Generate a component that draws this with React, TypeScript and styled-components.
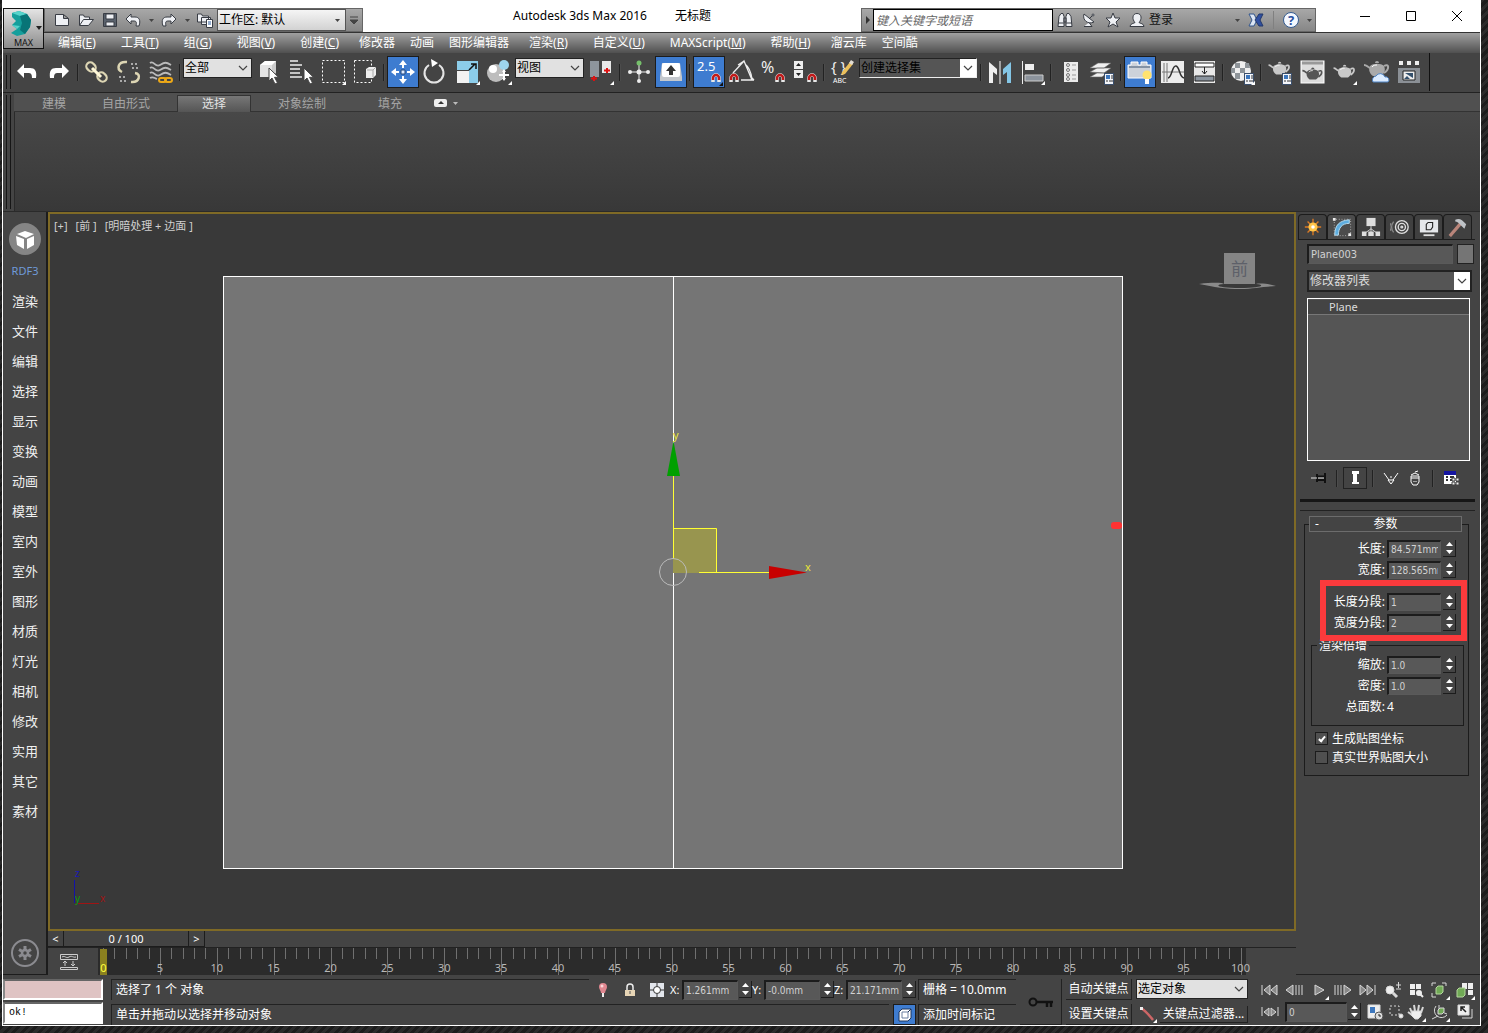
import React, { useId } from "react";
import styled, { createGlobalStyle, css } from "styled-components";

const sans = `"Noto Sans", "Noto Sans CJK SC", sans-serif`;
const compact = `"DejaVu Sans Condensed", "Noto Sans", "Noto Sans CJK SC", sans-serif`;

const GlobalStyle = createGlobalStyle`
  *, *::before, *::after { box-sizing: border-box; }
  body { margin: 0; background: #1d1d1d; font: 12px/16px ${sans}; color: #fff; }
  button, input, select { font: inherit; color: inherit; margin: 0; border-radius: 0; }
  button { padding: 0; border: 0; background: none; }
  svg { display: block; flex: none; }
`;

/* ---------- window shell ---------- */

const Desktop = styled.div`
  min-height: 100vh;
  display: flex;
  padding: 0 7px 7px 2px;
  background: repeating-linear-gradient(135deg, #1c1c1c 0 3px, #2b2b2b 3px 6px);
`;

const AppWindow = styled.div`
  flex: 1;
  min-width: 0;
  display: flex;
  flex-direction: column;
  border: 1px solid #fff;
  border-top: 0;
  background: #444;
`;

const Header = styled.header`
  display: grid;
  grid-template: 32px 21px / 41px minmax(0, 1fr);
  background: #fff;
`;

const AppButton = styled.button`
  grid-area: 1 / 1 / 3 / 2;
  z-index: 1;
  margin-top: 8px;
  height: 41px;
  border: 1px solid #111;
  background: linear-gradient(#e4e4e4, #8c8c8c);
  color: #111;
  font-size: 9px;
  line-height: 9px;
  display: flex;
  flex-direction: column;
  align-items: center;
`;

const TitleBar = styled.div`
  grid-area: 1 / 2;
  display: flex;
  align-items: flex-end;
  color: #000;
`;

const bar = css`
  height: 24px;
  display: flex;
  align-items: center;
  border: 1px solid #666;
  background: linear-gradient(#a8a8a8, #878787);
`;

const QuickAccess = styled.div`
  ${bar}
  width: 319px;
  padding-left: 5px;
`;

const QuickButton = styled.button<{ $w?: number }>`
  width: ${(p) => p.$w ?? 24}px;
  height: 22px;
  display: grid;
  place-items: center;
`;

const Title = styled.h1`
  flex: 1;
  align-self: center;
  margin: 0;
  display: flex;
  justify-content: center;
  gap: 28px;
  font-weight: 400;
  font-size: 12px;
  line-height: 16px;
  white-space: nowrap;
`;

const InfoCenter = styled.div`
  ${bar}
  width: 455px;
`;

const BarDivider = styled.span`
  width: 1px;
  height: 18px;
  margin: 0 5px;
  background: #808080;
`;

const SearchBox = styled.input`
  width: 180px;
  height: 22px;
  border: 1px solid #000;
  background: #fff;
  padding: 0 2px;
  &::placeholder { color: #666; font-style: italic; opacity: 1; }
`;

const SignIn = styled.button`
  flex: 1;
  height: 22px;
  text-align: left;
  color: #111;
`;

const WindowButtons = styled.div`
  width: 164px;
  height: 32px;
  display: flex;
  justify-content: flex-end;
`;

const WindowButton = styled.button`
  width: 46px;
  display: grid;
  place-items: center;
`;

const MenuBar = styled.nav`
  grid-area: 2 / 1 / 3 / 3;
  display: flex;
  align-items: center;
  gap: 1px;
  padding-left: 43px;
  border-top: 1px solid #333;
  background: linear-gradient(#a0a0a0, #505050);
`;

const MenuItem = styled.button<{ $wide: boolean }>`
  padding: 0 ${(p) => (p.$wide ? 12 : 7)}px;
  line-height: 16px;
  white-space: nowrap;
  color: #fff;
`;

/* ---------- drop-downs, fields, spinners ---------- */

type Tone = "light" | "dark" | "title" | "named";

const tones: Record<Tone, { back: string; text: string; edge: string; button: string }> = {
  light: { back: "#e1e1e1", text: "#000", edge: "#222", button: "none" },
  title: { back: "linear-gradient(#f5f5f5, #d2d2d2)", text: "#000", edge: "#555", button: "none" },
  dark: { back: "#555", text: "#ddd", edge: "#222", button: "#fff" },
  named: { back: "#555", text: "#000", edge: "#222 #eee #eee #222", button: "#fff" },
};

const SelectFrame = styled.span<{ $w?: number; $h: number; $tone: Tone }>`
  display: grid;
  grid-template-columns: minmax(0, 1fr) 16px;
  width: ${(p) => (p.$w ? `${p.$w}px` : "100%")};
  height: ${(p) => p.$h}px;
  border: ${(p) => (p.$tone === "dark" ? "2px" : "1px")} solid;
  border-color: ${(p) => tones[p.$tone].edge};
  background: ${(p) => tones[p.$tone].back};
  color: ${(p) => tones[p.$tone].text};
  select {
    grid-area: 1 / 1 / 2 / 3;
    appearance: none;
    border: 0;
    background: none;
    padding: 0 1px;
    min-width: 0;
    line-height: 16px;
  }
  svg {
    grid-area: 1 / 2;
    width: 16px;
    height: 100%;
    pointer-events: none;
    background: ${(p) => tones[p.$tone].button};
  }
`;

function Select({ label, value, w, h, tone = "light" }: { label: string; value: string; w?: number; h: number; tone?: Tone }) {
  return (
    <SelectFrame $w={w} $h={h} $tone={tone}>
      <select aria-label={label}><option>{value}</option></select>
      <svg viewBox="0 0 16 16">
        {tone === "title" ? <path d="M6 7h5l-2.500 3z" fill="#444" /> : <path d="M4 6l4 4 4-4" fill="none" stroke="#444" strokeWidth="1.200" />}
      </svg>
    </SelectFrame>
  );
}

const Field = styled.input<{ $w?: number; $h?: number }>`
  width: ${(p) => (p.$w ? `${p.$w}px` : "100%")};
  min-width: 0;
  height: ${(p) => p.$h ?? 18}px;
  padding: 0 2px;
  border: 1px solid #5a5a5a;
  border-top: 2px solid #1c1c1c;
  border-left: 2px solid #1c1c1c;
  background: #585858;
  color: #d2d2d2;
  font: 10px/14px ${compact};
`;

const SpinnerFrame = styled.span`
  width: 13px;
  height: 17px;
  flex: none;
  display: flex;
  flex-direction: column;
  border-right: 1px solid #1c1c1c;
  border-bottom: 1px solid #1c1c1c;
  button { flex: 1; display: grid; place-items: center; }
`;

const Spinner = () => (
  <SpinnerFrame>
    <button aria-label="+"><svg width="7" height="4"><path d="M0 4L3.500 0 7 4z" fill="#fff" /></svg></button>
    <button aria-label="-"><svg width="7" height="4"><path d="M0 0L3.500 4 7 0z" fill="#fff" /></svg></button>
  </SpinnerFrame>
);

/* ---------- main toolbar ---------- */

const Toolbar = styled.div`
  height: 40px;
  border-bottom: 1px solid #222;
  display: flex;
`;

const ToolbarStrip = styled.div`
  height: 38px;
  padding: 0 5px 0 3px;
  display: flex;
  align-items: center;
  border-right: 1px solid #111;
`;

const Grip = styled.span`
  width: 5px;
  align-self: stretch;
  margin: 2px 0;
  border: solid #161616;
  border-width: 0 1px;
`;

const Divider = styled.span<{ $h?: number }>`
  width: 2px;
  height: ${(p) => p.$h ?? 17}px;
  margin: 0 2px;
  flex: none;
  background: #222;
  border-right: 1px solid #4c4c4c;
`;

const Tool = styled.button<{ $on?: boolean }>`
  width: 32px;
  height: 32px;
  flex: none;
  display: grid;
  place-items: center;
  ${(p) => p.$on && css`
    background: #3e7cd0 padding-box;
    border: 1px solid #1c1c1c;
    svg { margin: -1px; }
  `}
`;

const ToolSelect = styled.span<{ $w: number }>`
  width: ${(p) => p.$w}px;
  height: 28px;
  padding-right: 1px;
`;

const Magnet = ({ x = 0 }: { x?: number }) => (
  <g transform={`translate(${x} 0)`} fill="none">
    <path d="M18 26v-4a3 3 0 0 1 6 0v4" stroke="#e9e9e9" strokeWidth="3.500" />
    <path d="M18 24v-2a3 3 0 0 1 6 0v2" stroke="#c11919" strokeWidth="2.500" />
  </g>
);

const Corner = () => <path d="M29 29v-4l-4 4z" fill="#fff" />;
const Cursor = ({ x = 0, y = 0 }) => <path transform={`translate(${x} ${y})`} d="M16 12v13l3-3 3 6 2.500-1.200-3-5.500h4z" fill="#fff" stroke="#444" />;
const Page = () => (
  <g>
    <rect x="18.500" y="17.500" width="9" height="11" fill="#f4f6fa" stroke="#3b4f6c" />
    <rect x="20" y="19" width="4" height="4" fill="#3d77bd" />
    <path d="M25 20h2M25 22h2M20 25h2M23 25h4" stroke="#333" />
  </g>
);
const Teapot = ({ fill = "#c9c9c9" }) => (
  <g>
    <path d="M23 13c5-3 6 3 0 7M9 15c-3-1-3-3-6-3" stroke={fill} strokeWidth="2" fill="none" />
    <path d="M9 13c3-3 11-3 14 0 2 4 0 8-3 10h-8c-3-2-5-6-3-10z" fill={fill} />
    <path d="M14 10a2 2 0 0 1 4 0z" fill={fill} />
    <path d="M11 14c1-2 4-2 5-2" stroke="#fff" fill="none" />
  </g>
);

const art: Record<string, React.ReactNode> = {
  undo: <path d="M6 15l7-7v4h6c5 0 7 3 6 10h-4c0-4-1-5-4-5h-4v5z" fill="#fff" />,
  redo: <path d="M26 15l-7-7v4h-6c-5 0-7 3-6 10h4c0-4 1-5 4-5h4v5z" fill="#fff" />,
  link: (
    <g fill="none" stroke="#ddd6b4" strokeWidth="2.200">
      <rect x="5" y="7" width="10" height="8" rx="4" transform="rotate(45 10 11)" />
      <rect x="16" y="17" width="10" height="8" rx="4" transform="rotate(45 21 21)" />
      <path d="M11 12l9 9" stroke="#fff8d8" strokeWidth="3" />
    </g>
  ),
  unlink: (
    <g fill="none" stroke="#ddd6b4" strokeWidth="2.500">
      <path d="M9 16c-6-3-4-11 5-10M22 17c7 1 4 10-4 9" />
      <path d="M18 8h8M19 12h7M6 21h7M7 25h6" stroke="#aaa" strokeWidth="2" strokeDasharray="2 2" />
    </g>
  ),
  bind: (
    <g fill="none" stroke="#bbb" strokeWidth="1.800">
      {[7, 12, 17].map((y) => <path key={y} d={`M5 ${y}c4-3 5 5 10 2s6-3 11 0`} />)}
      <path d="M5 22c3-2 4 0 7 1" />
      <rect x="14" y="22" width="7" height="4" rx="2" stroke="#eca817" strokeWidth="2" />
      <rect x="20" y="22" width="7" height="4" rx="2" stroke="#eca817" strokeWidth="2" />
    </g>
  ),
  pick: <g><path d="M7 9l5-4h11v12l-4 4H7z" fill="#ccc" /><path d="M7 9l5-4h11l-4 4z" fill="#fff" /><path d="M7 9h12v12H7z" fill="#e4e4e4" /><Cursor /></g>,
  byName: <g><path d="M5 5h8M5 9h12M5 13h10M5 17h10M5 21h12" stroke="#eee" strokeWidth="1.500" /><Cursor x={3} /></g>,
  region: <g><rect x="5.500" y="4.500" width="22" height="22" fill="none" stroke="#fff" strokeDasharray="2 2" /><Corner /></g>,
  crossing: <g><rect x="5.500" y="4.500" width="17" height="22" fill="none" stroke="#fff" strokeDasharray="2 2" /><path d="M17 13l3-2h7v8l-3 3h-7z" fill="#eee" /><path d="M24 14v7M18 14h6l3-3" stroke="#aaa" fill="none" /></g>,
  move: <g fill="#fff"><path d="M16 4l4 5h-3v3h-2V9h-3zM16 28l4-5h-3v-3h-2v3h-3zM4 16l5-4v3h3v2H9v3zM28 16l-5-4v3h-3v2h3v3z" /><path d="M14 14h4v4h-4z" fill="#dfeaff" stroke="#24487a" /></g>,
  rotate: <g><path d="M10 9a9.500 9.500 0 1 0 10 0" fill="none" stroke="#e5e5e5" strokeWidth="2" /><path d="M12 3l7 4-6 4z" fill="#fff" /></g>,
  scale: <g><path d="M6 5h21v22H18V14H6z" fill="#8ccdea" /><rect x="6" y="15" width="12" height="12" fill="#f2f2f2" /><path d="M18 14l6-6M20 8h5v5" stroke="#111" strokeWidth="1.500" fill="none" /><Corner /></g>,
  place: <g><circle cx="13" cy="17" r="9" fill="#bdbdbd" /><circle cx="10" cy="13" r="4" fill="#fff" /><circle cx="21" cy="9" r="5" fill="#9ed5ee" /><path d="M21 14v10M16 19h10" stroke="#fff" strokeWidth="2" /><path d="M19 16l2-3 2 3zM19 22l2 3 2-3z" fill="#fff" /><Corner /></g>,
  pivot: <g><path d="M5 5h9v16H5z" fill="#8e959c" /><path d="M17 5h9v12h-9z" fill="#e9e9e9" /><path d="M9 20v5M6 22.500h6M22 12v5M19 14.500h6" stroke="#d11" strokeWidth="2" /><Corner /></g>,
  manipulate: <g><path d="M16 7v18M7 16h18" stroke="#eee" /><g fill="#eee"><circle cx="16" cy="16" r="2.500" /><circle cx="7" cy="16" r="2" /><circle cx="25" cy="16" r="2" /><circle cx="16" cy="25" r="2" /></g><circle cx="16" cy="7" r="2.500" fill="#76c06b" /></g>,
  keyboard: <g><path d="M7 7h18l2 14v4H5v-4z" fill="#c4c8cd" /><rect x="7" y="7" width="18" height="14" rx="2" fill="#fff" /><path d="M16 9l5 6h-3v4h-4v-4h-3z" fill="#333" /></g>,
  snap: <g><text x="4" y="15" fill="#fff" fontSize="13">2.5</text><Magnet x={2} /><path d="M30 30v-4l-4 4z" fill="#111" /></g>,
  angle: <g><path d="M8 17L19 5l8 19M13 9l6-4M20 8c4 3 6 8 7 15M16 24h13M26 21l3 3" stroke="#eee" fill="none" strokeWidth="1.300" /><Magnet x={-12} /></g>,
  percent: <g><text x="4" y="17" fill="#eee" fontSize="16">%</text><Magnet x={2} /></g>,
  spinner: <g><path d="M5 5h9v8H5zM5 14h9v8H5z" fill="#eee" /><path d="M7 10l2.500-3L12 10zM7 17l2.500 3 2.500-3z" fill="#222" /><Magnet x={2} /></g>,
  named: <g><text x="4" y="16" fill="#eee" fontSize="15">{"{ }"}</text><text x="6" y="27" fill="#fff" fontSize="7">ABC</text><path d="M15 16l8-10 3 2-8 10-4 1z" fill="#ecc05b" /><path d="M22 7l2-3 3 2-2 3z" fill="#e2ddd4" /></g>,
  mirror: <g><path d="M5 6l8 7v6l-4-3v11H5z" fill="#eee" /><path d="M27 6l-8 7v6l4-3v11h4z" fill="#84c6e6" /><path d="M16 5v23" stroke="#fff" /></g>,
  align: <g><path d="M6.500 5v23" stroke="#eee" /><path d="M9 8h9v6H9z" fill="#eee" /><path d="M9 19h18v6H9z" fill="#8c939c" stroke="#ccc" /><Corner /></g>,
  list: <g><path d="M10 6h14v20H10z" fill="#ececec" />{[9, 14, 19, 23].map((y) => <g key={y}><circle cx="14" cy={y} r="1.500" fill="none" stroke="#777" /><path d={`M18 ${y}h4`} stroke="#999" /></g>)}</g>,
  layers: <g><path d="M4 16l7-4h14l-7 5zM4 12l8-5h13l-7 5zM4 21l7-4h10l-5 4z" fill="#f0f0f0" stroke="#666" strokeWidth=".6" /><Page /></g>,
  ribbon: <g><path d="M4 9h3V6h7v3h3V6h6v3h4v13H4z" fill="#ccd2da" stroke="#fff" /><path d="M5 11h21" stroke="#8392a5" strokeWidth="2" /><circle cx="23" cy="19" r="4.500" fill="#ffe36f" /><path d="M21 23h4v5h-4z" fill="#fff" /></g>,
  curve: <g><rect x="5" y="5" width="23" height="22" fill="#ededed" /><path d="M8 7v19M11 7v19M6 16h22" stroke="#777" /><path d="M12 22c4 0 4-13 8-12s3 11 8 12" fill="none" stroke="#333" strokeWidth="1.500" /></g>,
  schematic: <g><rect x="6" y="5" width="21" height="22" fill="#e8e8e8" /><path d="M7 7h19v4H7z" fill="#fff" stroke="#222" /><path d="M7 20h19v5H7z" fill="#8b949e" stroke="#222" /><path d="M16.500 11v7M14 15l2.500 3 2.500-3" stroke="#222" fill="none" /></g>,
  material: <g><circle cx="15" cy="15" r="10" fill="#f0f0f0" /><path d="M9 7h5v5H9zM19 7h4l1 5h-5zM5 12h4v5H5zM14 12h5v5h-5zM9 17h5v6H9zM19 17h5l-2 5h-3z" fill="#8e9499" /><Page /><Corner /></g>,
  renderSetup: <g><g transform="translate(2 -1) scale(.85)"><Teapot /></g><Page /></g>,
  frame: <g><rect x="5" y="5" width="23" height="22" fill="#ddd" stroke="#fff" /><path d="M6 7h21" stroke="#999" strokeWidth="3" /><g transform="translate(4 5) scale(.8)"><Teapot fill="#555" /></g></g>,
  render: <g><g transform="translate(3 2) scale(.85)"><Teapot /></g><Corner /></g>,
  cloud: <g><g transform="translate(1 -3)"><Teapot fill="#aaa" /></g><path d="M13 26a4 4 0 0 1 3-6 5 5 0 0 1 9 1 3 3 0 0 1 3 5z" fill="#dcecff" stroke="#4f83c2" /></g>,
  gallery: <g><path d="M7 5h4v4H7zM15 5h4v4h-4zM23 5h4v4h-4z" fill="#eee" /><path d="M6 12h22v15H6z" fill="#8b9096" /><path d="M11 15h12v9H11z" fill="#eee" stroke="#222" /><path d="M13 17l8 5v-5zM12 23l3-3 3 3z" fill="#34506c" /></g>,
};

const toolbar = [
  "undo", "redo", "|", "link", "unlink", "bind", "|", "全部", "pick", "byName", "region", "crossing", "|",
  "move", "rotate", "scale", "place", "视图", "pivot", "|", "manipulate", "keyboard", "|", "snap", "angle", "percent",
  "spinner", "|", "named", "创建选择集", "|", "mirror", "align", "|", "list", "layers", "|", "ribbon", "curve",
  "schematic", "|", "material", "|", "renderSetup", "frame", "render", "cloud", "gallery",
];
const pressed = ["move", "keyboard", "snap", "ribbon"];

function MainToolbar() {
  return (
    <Toolbar>
      <ToolbarStrip>
        <Grip />
        {toolbar.map((id, i) => {
          if (id === "|") return <Divider key={i} />;
          if (art[id]) return <Tool key={i} $on={pressed.includes(id)} aria-label={id}><svg width="32" height="32">{art[id]}</svg></Tool>;
          const named = id === "创建选择集";
          return (
            <ToolSelect key={i} $w={named ? 119 : 70}>
              <Select label={id} value={id} h={20} tone={named ? "named" : "light"} />
            </ToolSelect>
          );
        })}
      </ToolbarStrip>
    </Toolbar>
  );
}

/* ---------- ribbon ---------- */

const Ribbon = styled.section`
  display: grid;
  grid-template: 19px 99px / 11px minmax(0, 1fr);
  border-bottom: 1px solid #2a2a2a;
  background: #444;
`;

const RibbonGrip = styled.span`
  grid-row: 1 / 3;
  width: 5px;
  margin: 2px 3px;
  border: solid #161616;
  border-width: 0 1px;
`;

const RibbonTabs = styled.div`
  display: flex;
  padding: 2px 0 0 19px;
  background: #505050;
  border-bottom: 1px solid #333;
`;

const RibbonTab = styled.button<{ $on?: boolean; $first?: boolean }>`
  width: ${(p) => (p.$first ? 42 : 74)}px;
  height: 17px;
  color: ${(p) => (p.$on ? "#e2e2e2" : "#a5a5a5")};
  & + & { margin-left: 14px; }
  ${(p) => p.$on && css`
    background: linear-gradient(#777, #555);
    border: 1px solid #333;
    border-bottom: 0;
  `}
`;

const RibbonToggle = styled.button`
  width: 40px;
  display: grid;
  place-items: center;
`;

const RibbonPanel = styled.div`
  grid-column: 2;
  border-left: 1px solid #2a2a2a;
  background: linear-gradient(#484848, #383838);
`;

/* ---------- body ---------- */

const Body = styled.main`
  flex: 1;
  display: grid;
  grid-template-columns: 45px minmax(0, 1fr) 184px;
`;

const SideBar = styled.aside`
  display: flex;
  flex-direction: column;
  align-items: center;
  padding: 10px 0 4px 1px;
  border: solid #1c1c1c;
  border-width: 0 2px 1px 0;
`;

const SideItem = styled.button<{ $accent?: boolean }>`
  width: 100%;
  height: 30px;
  font-size: ${(p) => (p.$accent ? 11 : 13)}px;
  color: ${(p) => (p.$accent ? "#6f9ad8" : "#f0f0f0")};
`;

const SideRound = styled.button`
  height: 34px;
  &:last-child { margin-top: auto; }
`;

const Stage = styled.section`
  min-width: 0;
  display: grid;
  grid-template-rows: minmax(0, 1fr) 17px 27px;
`;

const Viewport = styled.div`
  position: relative;
  min-height: 400px;
  border: 2px solid #7f6a26;
  background: #393939;
  > svg { position: absolute; inset: 0; width: 100%; height: 100%; }
`;

const ViewLabels = styled.div`
  position: absolute;
  top: 4px;
  left: 4px;
  z-index: 1;
  display: flex;
  gap: 8px;
  font-size: 11px;
  color: #cfcfcf;
  button { white-space: pre; }
`;

const SliderRow = styled.div`
  display: flex;
  border-bottom: 1px solid #222;
`;

const SliderButton = styled.button<{ $w: number }>`
  width: ${(p) => p.$w}px;
  line-height: 15px;
  font-size: 11px;
  border: solid #1c1c1c;
  border-width: 0 1px 1px 0;
`;

const RulerRow = styled.div`
  display: grid;
  grid-template-columns: 50px minmax(0, 1fr) 50px;
`;

const CurveToggle = styled.button`
  display: grid;
  place-items: center;
  padding-right: 8px;
`;

const Ruler = styled.div`
  display: flex;
  padding: 0 4px 0 5px;
  background: #2b2b2b;
`;

const Tick = styled.span<{ $major: boolean; $last: boolean }>`
  flex: ${(p) => (p.$last ? "0 0 1px" : "1 1 0")};
  min-width: 0;
  height: ${(p) => (p.$major ? 27 : 11)}px;
  border-left: 1px solid #707070;
  display: flex;
  align-items: flex-end;
`;

const TickLabel = styled.span<{ $now: boolean }>`
  flex: none;
  width: 24px;
  margin-left: -13px;
  text-align: center;
  font-size: 11px;
  line-height: 15px;
  color: ${(p) => (p.$now ? "#ffff40" : "#b8b8b8")};
  ${(p) => p.$now && css`
    width: 7px;
    margin-left: -4px;
    height: 26px;
    padding-top: 11px;
    background: #8a801f;
  `}
`;

function Scene() {
  return (
    <svg viewBox="50 214 1244 715" aria-hidden="true">
      <rect x="223.500" y="276.500" width="899" height="592" fill="#757575" stroke="#fff" />
      <path d="M673.500 276v592" stroke="#fff" />
      <rect x="1111" y="522" width="11" height="7" rx="3" fill="#f33" />
      <rect x="673" y="528" width="44" height="45" fill="#98954f" />
      <path d="M673.500 528.500h43v44" fill="none" stroke="#ffff33" />
      <rect x="673" y="476" width="1" height="83" fill="#ffff33" />
      <rect x="699" y="572" width="70" height="1" fill="#ffff33" />
      <path d="M673.500 441l6.500 35h-13z" fill="#00a000" />
      <path d="M807 572.500l-38 6.500v-13z" fill="#c80000" />
      <circle cx="673" cy="572" r="13.500" fill="none" stroke="#bbb" />
      <text x="673" y="439" fill="#e8e337" fontSize="11">y</text>
      <text x="805" y="571" fill="#e8e337" fontSize="11">x</text>
      <path d="M74.500 880v23" stroke="#1212a8" />
      <path d="M78 903.500h21" stroke="#a01414" />
      <text x="75" y="877" fill="#1818b8" fontSize="10">z</text>
      <text x="75" y="902" fill="#109a10" fontSize="10">y</text>
      <text x="100" y="902" fill="#a01414" fontSize="10">x</text>
      <path d="M1199 284c16-2 24-1 25 0-12 1-4 4 16 4s27-3 16-4c4-1 13 0 20 2-15 1-22 3-36 3s-26-2-41-5z" fill="#8a8a8a" />
      <rect x="1224" y="253" width="31" height="31" fill="#858585" />
      <text x="1231" y="275" fill="#5d6069" fontSize="17">前</text>
    </svg>
  );
}

/* ---------- command panel ---------- */

const Panel = styled.aside`
  padding: 2px 5px 0 4px;
  border-bottom: 1px solid #222;
`;

const PanelTabs = styled.div`
  display: flex;
  margin: 0 0 4px -2px;
  border-bottom: 1px solid #1c1c1c;
`;

const PanelTab = styled.button<{ $on: boolean }>`
  width: 29px;
  height: 25px;
  display: grid;
  place-items: center;
  border: 1px solid #1c1c1c;
  border-bottom: 0;
  border-radius: 4px 4px 0 0;
  background: ${(p) => (p.$on ? "#4c4c4c" : "#404040")};
`;

const PanelStack = styled.div`
  display: flex;
  flex-direction: column;
  gap: 6px;
  padding: 0 3px 0 7px;
`;

const NameRow = styled.div`
  display: flex;
  gap: 4px;
  margin-right: -2px;
  input { font-size: 11px; }
`;

const Swatch = styled.button`
  flex: none;
  width: 17px;
  height: 20px;
  background: #757575;
  border: 1px solid #222;
`;

const ModifierStack = styled.ul`
  list-style: none;
  margin: 0 2px 0 0;
  padding: 1px 0 0;
  height: 163px;
  border: 1px solid #fff;
  background: #555;
  font-size: 11px;
  color: #ddd;
  li {
    height: 15px;
    line-height: 14px;
    padding-left: 21px;
    background: #444;
    border-bottom: 1px solid #777;
  }
`;

const StackTools = styled.div`
  display: flex;
  align-items: center;
  height: 22px;
`;

const StackTool = styled.button<{ $on?: boolean }>`
  width: 24px;
  height: 22px;
  display: grid;
  place-items: center;
  border: 1px solid ${(p) => (p.$on ? "#222" : "transparent")};
`;

const StackDivider = styled(Divider)`
  margin: 0 5px;
`;

const PanelRule = styled.hr`
  margin: 10px 0 8px;
  height: 3px;
  border: 0;
  background: #161616;
`;

const RollScroll = styled.div`
  padding: 5px 6px 0 4px;
  border-top: 1px solid #222;
`;

const Rollout = styled.section`
  position: relative;
  padding: 21px 5px 9px;
  &::before {
    content: "";
    position: absolute;
    inset: 8px 0 0;
    border: 1px solid #1c1c1c;
    pointer-events: none;
  }
`;

const RolloutTitle = styled.button`
  position: relative;
  width: calc(100% - 2px);
  height: 16px;
  margin: -21px 0 6px;
  display: grid;
  grid-template-columns: 8px 1fr 8px;
  padding: 0 3px;
  line-height: 14px;
  border: 1px solid #6c6c6c;
  background: #444;
`;

const ParamRow = styled.div`
  height: 21px;
  display: grid;
  grid-template-columns: minmax(0, 1fr) 54px 13px;
  align-items: center;
  column-gap: 2px;
  padding-right: 8px;
  label { text-align: right; white-space: nowrap; }
`;

const Highlight = styled.div`
  position: relative;
  margin: 11px 0 12px;
  &::after {
    content: "";
    position: absolute;
    inset: -11px -3px -8px 11px;
    border: 6px solid #fb3a3c;
    pointer-events: none;
    z-index: 1;
  }
`;

const Group = styled.fieldset`
  position: relative;
  margin: 0 0 3px 2px;
  padding: 8px 0;
  border: 1px solid #1c1c1c;
  min-width: 0;
  legend {
    position: absolute;
    top: -8px;
    left: 5px;
    padding: 0 2px;
    background: #444;
  }
  ${ParamRow} { padding-right: 7px; }
`;

const CheckRow = styled.label`
  display: flex;
  align-items: center;
  gap: 4px;
  height: 19px;
  padding-left: 6px;
`;

const CheckBox = styled.input`
  appearance: none;
  width: 13px;
  height: 13px;
  display: grid;
  place-items: center;
  border: 1px solid #1c1c1c;
  background: #505050;
  &:checked::after {
    content: "";
    width: 4px;
    height: 7px;
    border: solid #fff;
    border-width: 0 2px 2px 0;
    transform: rotate(40deg);
  }
`;

function Param({ label, value }: { label: string; value: string }) {
  const id = useId();
  return (
    <ParamRow>
      <label htmlFor={id}>{label}:</label>
      <Field id={id} defaultValue={value} />
      <Spinner />
    </ParamRow>
  );
}

const panelArt: [string, React.ReactNode][] = [
  ["创建", <g><path d="M11 2v18M2 11h18M5 5l12 12M17 5L5 17" stroke="#d97a24" strokeWidth="1.500" /><circle cx="11" cy="11" r="5" fill="#ffc64a" /><circle cx="11" cy="11" r="2" fill="#fff" /></g>],
  ["修改", <g><path d="M3 20C3 9 8 4 19 3v4c-8 0-12 5-12 13z" fill="#5eaddf" stroke="#bce3f7" /><path d="M2.500 2.500v18h18v-18z" fill="none" stroke="#bbb" strokeDasharray="1 2" /><path d="M1 1h3v3H1zM18 18h3v3h-3z" fill="#eee" /></g>],
  ["层次", <g><path d="M6 1h10v9H6z" fill="#ddd" /><path d="M11 10v8M11 13L4 18M11 13l7 5" stroke="#ddd" fill="none" /><path d="M1 16h5v5H1zM8 16h6v5H8zM16 16h5v5h-5z" fill="#ddd" /></g>],
  ["运动", <g fill="none" stroke="#ddd" strokeWidth="1.500"><circle cx="13" cy="11" r="7" /><circle cx="13" cy="11" r="4" /><circle cx="13" cy="11" r="1" /><path d="M4 5c-3 4-3 8 0 12M1 7c-2 3-2 5 0 8" stroke="#888" /></g>],
  ["显示", <g><rect x="1" y="3" width="20" height="14" fill="#e5e7ea" /><path d="M5 20h12" stroke="#ddd" strokeWidth="2" /><path d="M8 8l2-2h5v5l-2 3H8z" fill="none" stroke="#222" strokeWidth="1.200" /></g>],
  ["实用程序", <g><path d="M2 21L14 7" stroke="#b9857a" strokeWidth="3.500" /><path d="M8 3c5-2 7 0 12 5l-2 5-5-5c-2-2-3-3-5-3z" fill="#bfc3c7" /></g>],
];

function CommandPanel() {
  return (
    <Panel>
      <PanelTabs>
        {panelArt.map(([name, icon], i) => (
          <PanelTab key={name} aria-label={name} $on={i === 1}><svg width="20" height="20" viewBox="0 0 22 22">{icon}</svg></PanelTab>
        ))}
      </PanelTabs>
      <PanelStack>
        <NameRow><Field aria-label="名称" defaultValue="Plane003" $h={20} /><Swatch aria-label="颜色" /></NameRow>
        <Select label="修改器列表" value="修改器列表" h={22} tone="dark" />
        <ModifierStack><li>Plane</li></ModifierStack>
        <StackTools>
          <StackTool aria-label="锁定堆栈"><svg width="18" height="14"><path d="M7 3v8M7 5.500h8M7 9h8M15 2v10" stroke="#111" strokeWidth="2" /><path d="M1 7h6M8 7h6" stroke="#ddd" /></svg></StackTool>
          <StackDivider />
          <StackTool $on aria-label="显示最终结果"><svg width="10" height="16"><path d="M2 1h7v3H7v8h2v2H2v-2h1V4H2z" fill="#fff" /></svg></StackTool>
          <StackDivider />
          <StackTool aria-label="使唯一"><svg width="16" height="16"><path d="M1 3l5 7M15 3l-5 7M5 10h6l-3 4zM8 6v2" stroke="#fff" fill="none" /></svg></StackTool>
          <StackTool aria-label="移除修改器"><svg width="14" height="16"><path d="M3 6h8v6l-2 3H5l-2-3zM3 8h8M6 11v1M8 11v1M3 5l4-2 4 2M7 2l3-1" stroke="#fff" fill="none" /></svg></StackTool>
          <StackDivider />
          <StackTool aria-label="配置修改器集"><svg width="17" height="16"><path d="M1 1h12v13H1z" fill="#fff" /><path d="M1 1h12v4H1z" fill="#1515a0" /><path d="M3 7h2M3 10h2M7 7h4M7 10h3" stroke="#333" strokeWidth="2" /><path d="M9 8h3v3H9zM13 8h3v3h-3zM9 12h3v3H9zM13 12h3v3h-3z" fill="#eee" stroke="#444" /></svg></StackTool>
        </StackTools>
      </PanelStack>
      <PanelRule />
      <RollScroll>
        <Rollout>
          <RolloutTitle><span>-</span><span>参数</span></RolloutTitle>
          <Param label="长度" value="84.571mm" />
          <Param label="宽度" value="128.565mm" />
          <Highlight>
            <Param label="长度分段" value="1" />
            <Param label="宽度分段" value="2" />
          </Highlight>
          <Group>
            <legend>渲染倍增</legend>
            <Param label="缩放" value="1.0" />
            <Param label="密度" value="1.0" />
            <ParamRow><label htmlFor="faces">总面数:</label><output id="faces">4</output></ParamRow>
          </Group>
          <CheckRow><CheckBox type="checkbox" defaultChecked />生成贴图坐标</CheckRow>
          <CheckRow><CheckBox type="checkbox" />真实世界贴图大小</CheckRow>
        </Rollout>
      </RollScroll>
    </Panel>
  );
}

/* ---------- status area ---------- */

const twoRows = css`
  display: grid;
  grid-template-rows: 21px 21px;
  row-gap: 4px;
`;

const StatusArea = styled.footer`
  height: 50px;
  display: grid;
  grid-template-columns: 100px minmax(0, 1fr) 98px 42px 66px 112px 228px;
  column-gap: 4px;
  padding-top: 4px;
`;

const Listener = styled.div`
  display: grid;
  grid-template-rows: 21px 22px;
  gap: 2px;
`;

const ListenerLine = styled.input<{ $pink?: boolean }>`
  width: 100%;
  min-width: 0;
  border: 2px solid #fff;
  border-top-color: #666;
  border-left-color: #888;
  background: ${(p) => (p.$pink ? "#dfc3c3" : "#fff")};
  color: #000;
  padding: 0 4px;
  font: 10px/16px "Liberation Mono", monospace;
`;

const StatusRows = styled.div`
  ${twoRows}
  min-width: 0;
  padding-left: 4px;
`;

const StatusRow = styled.div`
  display: flex;
  align-items: center;
  margin-right: -2px;
`;

const Readout = styled.div`
  flex: 1;
  min-width: 0;
  height: 21px;
  padding: 0 4px;
  line-height: 20px;
  white-space: nowrap;
  border: solid #222;
  border-width: 1px 0 0 1px;
`;

const Cells = styled.div`
  ${twoRows}
`;

const StatusIcon = styled.button<{ $on?: boolean }>`
  width: ${(p) => (p.$on ? 23 : 27)}px;
  height: 21px;
  display: grid;
  place-items: center;
  ${(p) => p.$on && css`
    background: #3e7cd0;
    border: 1px solid #1c1c1c;
    margin-left: 4px;
  `}
`;

const Coord = styled.span`
  width: 82px;
  display: flex;
  align-items: center;
  gap: 1px;
  font-size: 11px;
  label { width: 11px; }
`;

const KeyButton = styled.button`
  display: grid;
  place-items: center;
  border: solid #222;
  border-width: 0 1px 1px 0;
  white-space: nowrap;
`;

const FilterRow = styled.div`
  display: grid;
  grid-template-columns: 24px minmax(0, 1fr);
  place-items: center stretch;
`;

const Transport = styled.div`
  display: grid;
  grid-template-rows: 21px 21px;
  row-gap: 1px;
  padding: 0 3px 0 6px;
`;

const TransportRow = styled.div`
  display: flex;
`;

const TransportButton = styled.button<{ $w?: number }>`
  flex: ${(p) => (p.$w ? `0 0 ${p.$w}px` : "1 1 0")};
  min-width: 0;
  display: grid;
  place-content: center;
`;

const FrameField = styled.span`
  flex: 0 0 81px;
  display: flex;
  align-items: center;
  gap: 1px;
  padding: 0 2px 0 3px;
`;

const Nook = () => <path d="M20 20v-4l-4 4z" fill="#fff" stroke="none" />;

const transportArt: Record<string, React.ReactNode> = {
  start: <g fill="#888"><path d="M2 5v10M10 5l-6 5 6 5zM17 5l-6 5 6 5z" /></g>,
  prev: <g fill="#888"><path d="M9 5l-7 5 7 5zM12 5v10M15 5v10M18 5v10" /></g>,
  play: <g fill="#888"><path d="M6 5l9 5-9 5z" /><Nook /></g>,
  next: <g fill="#888"><path d="M11 5l7 5-7 5zM2 5v10M5 5v10M8 5v10" /></g>,
  end: <g fill="#888"><path d="M18 5v10M10 5l6 5-6 5zM3 5l6 5-6 5z" /></g>,
  zoom: <g><circle cx="8" cy="10" r="4" fill="#eee" /><path d="M11 13l4 4" strokeWidth="3" /><path d="M14 5h5M16.500 2v6M14 9h5" /></g>,
  zoomAll: <g fill="#eee" stroke="none"><path d="M4 4h5v5H4zM10 4h5v5h-5zM4 10h5v5H4z" /><circle cx="13" cy="13" r="3" /><path d="M14 14l3 3" stroke="#eee" strokeWidth="2" /></g>,
  extents: <g><path d="M2 6V3h4M12 3h4v3M2 13v4h4" /><path d="M6 8l2-2h5v6l-2 2H6z" fill="#70a955" stroke="#b5d69f" /><Nook /></g>,
  extentsAll: <g><path d="M7 3h5v6H7zM13 3h5v6h-5zM13 10h5v5h-5z" fill="#eee" stroke="none" /><path d="M2 10l2-2h6v7l-2 2H2z" fill="#70a955" stroke="#b5d69f" /><Nook /></g>,
  key: <g fill="#888"><path d="M2 5v9M9 6l-5 4 5 4zM11 6l5 4-5 4zM18 5v9" /></g>,
  time: <g><path d="M3 3h12v13H3z" fill="#eee" /><path d="M5 5h5v6H5z" fill="#3d77bd" stroke="none" /><circle cx="14" cy="14" r="4" fill="#ddd" stroke="#555" /><path d="M14 12v2h2" stroke="#222" /></g>,
  region: <g><rect x="4" y="4" width="9" height="9" strokeDasharray="2 2" /><circle cx="15" cy="14" r="2" fill="#eee" /></g>,
  pan: <g><path d="M6 11L4 6M9 9L8 3M12 9l1-6M15 11l2-6M6 13l-4-3" strokeWidth="2" /><path d="M6 9h9v5l-3 3H9l-4-4z" fill="#eee" /><Nook /></g>,
  orbit: <g><path d="M6 4a7 7 0 1 0 11 9M2 17l6-3M9 9V3M12 10l5 2" /><path d="M8 8l2-2h4v4l-2 2H8z" fill="#70a955" /><Nook /></g>,
  max: <g><path d="M7 16h10V7" /><path d="M3 3h11v10H3z" fill="#eee" /><path d="M11 10L6 5M6 9V5h4" stroke="#222" strokeWidth="1.500" /></g>,
};

const TransportIcon = ({ id, w }: { id: string; w?: number }) => (
  <TransportButton $w={w} aria-label={id}><svg width="22" height="20" viewBox="-1 0 22 20" fill="none" stroke="#d8d8d8">{transportArt[id]}</svg></TransportButton>
);

function Coordinate({ axis, value }: { axis: string; value: string }) {
  const id = useId();
  return <Coord><label htmlFor={id}>{axis}:</label><Field id={id} defaultValue={value} $w={56} $h={20} /><Spinner /></Coord>;
}

function Status() {
  return (
    <StatusArea>
      <Listener>
        <ListenerLine $pink aria-label="宏录制器" />
        <ListenerLine aria-label="侦听器" defaultValue="ok!" />
      </Listener>
      <StatusRows>
        <StatusRow>
          <Readout>选择了 1 个 对象</Readout>
          <StatusIcon aria-label="标记"><svg width="12" height="16"><path d="M6 8v7" stroke="#eee" strokeWidth="2" /><path d="M2 5a4 4 0 0 1 8 0c0 2-2 4-2 6H4c0-2-2-4-2-6z" fill="#e08790" /><circle cx="5" cy="4" r="1.500" fill="#fbd6d8" /></svg></StatusIcon>
          <StatusIcon aria-label="锁定"><svg width="12" height="14"><path d="M3 7V4a3 3 0 0 1 6 0v3" fill="none" stroke="#eee" strokeWidth="1.500" /><path d="M1 7h10v6H1z" fill="#e7d5b5" /><path d="M6 8v3" stroke="#555" /></svg></StatusIcon>
          <StatusIcon aria-label="坐标模式"><svg width="14" height="14"><path d="M0 0h14v14H0z" fill="#e3e6ec" /><path d="M7 0v3M7 11v3M0 7h3M11 7h3" stroke="#333" /><circle cx="7" cy="7" r="3.500" fill="#fff" stroke="#333" /></svg></StatusIcon>
          <Coordinate axis="X" value="1.261mm" />
          <Coordinate axis="Y" value="-0.0mm" />
          <Coordinate axis="Z" value="21.171mm" />
        </StatusRow>
        <StatusRow>
          <Readout>单击并拖动以选择并移动对象</Readout>
          <StatusIcon $on aria-label="自适应降级"><svg width="16" height="16"><path d="M2 5l3-3h9v9l-3 3H2z" fill="#fff" stroke="#1f355a" /><path d="M5 5h6v6H5z" fill="#fff" stroke="#6b7f9f" /><path d="M11 5l3-3" stroke="#1f355a" /></svg></StatusIcon>
        </StatusRow>
      </StatusRows>
      <Cells><Readout>栅格 = 10.0mm</Readout><Readout>添加时间标记</Readout></Cells>
      <KeyButton aria-label="设置关键点"><svg width="26" height="14"><circle cx="5" cy="7" r="3.500" fill="none" stroke="#111" strokeWidth="2" /><path d="M9 7h16M19 7v5M23 7v5" stroke="#111" strokeWidth="2.500" /></svg></KeyButton>
      <Cells><KeyButton>自动关键点</KeyButton><KeyButton>设置关键点</KeyButton></Cells>
      <Cells>
        <Select label="关键点对象" value="选定对象" h={20} />
        <FilterRow>
          <TransportButton aria-label="切线"><svg width="20" height="18"><path d="M3 2c5 3 8 7 12 12" stroke="#c66" strokeWidth="2.500" fill="none" /><path d="M2 1h3v3H2z" fill="#eee" /><path d="M19 17v-4l-4 4z" fill="#fff" /></svg></TransportButton>
          <KeyButton>关键点过滤器...</KeyButton>
        </FilterRow>
      </Cells>
      <Transport>
        <TransportRow>
          {["start", "prev", "play", "next", "end", "zoom", "zoomAll", "extents", "extentsAll"].map((id) => <TransportIcon key={id} id={id} />)}
        </TransportRow>
        <TransportRow>
          <TransportIcon id="key" w={24} />
          <FrameField><Field aria-label="当前帧" defaultValue="0" $h={20} /><Spinner /></FrameField>
          <TransportIcon id="time" w={24} />
          <TransportIcon id="region" w={17} />
          {["pan", "orbit", "max"].map((id) => <TransportIcon key={id} id={id} />)}
        </TransportRow>
      </Transport>
    </StatusArea>
  );
}

/* ---------- header content ---------- */

const menus = ["编辑(E)", "工具(T)", "组(G)", "视图(V)", "创建(C)", "修改器", "动画", "图形编辑器", "渲染(R)", "自定义(U)", "MAXScript(M)", "帮助(H)", "溜云库", "空间酷"];

function MenuLabel({ text }: { text: string }) {
  const m = text.match(/^(.*\()(\w)\)$/);
  return <MenuItem $wide={!!m}>{m ? <>{m[1]}<u>{m[2]}</u>)</> : text}</MenuItem>;
}

const Caret = () => <svg width="5" height="3"><path d="M0 0h5L2.500 3z" fill="#444" /></svg>;

const glyph = { fill: "#eef0f4", stroke: "#383c44", strokeWidth: 1 };

function TopBar() {
  return (
    <Header>
      <AppButton aria-label="MAX">
        <svg width="38" height="29">
          <path d="M7 4l7-2 8 3 4 6-1 7-5 7-8 2-6-3 6-4-5-4 4-4-4-4z" fill="#159f9c" />
          <path d="M7 4l8 3 7-2-8-3zM7 16l8 1-3 3z" fill="#56d3cb" />
          <path d="M15 7l7-2 4 6-9 3zM15 21l2-7 9-3-1 7-5 7z" fill="#087477" />
          <path d="M31 17h6l-3 4z" fill="#222" />
        </svg>
        MAX
      </AppButton>
      <TitleBar>
        <QuickAccess>
          <QuickButton aria-label="新建"><svg width="18" height="16" {...glyph}><path d="M2.500 13.500v-11h8l5 4v7zM10.500 2.500v4h5" /></svg></QuickButton>
          <QuickButton aria-label="打开"><svg width="18" height="16" {...glyph}><path d="M2.500 13V3h4l1 2h5v3M2.500 13.500l4-6h10l-5 6z" /></svg></QuickButton>
          <QuickButton aria-label="保存"><svg width="16" height="16" {...glyph}><path d="M1.500 1.500h13v13h-13z" fill="#59616c" /><path d="M4 2h8v5H4zM4 10h8v4H4z" /></svg></QuickButton>
          <QuickButton aria-label="撤消"><svg width="18" height="16" {...glyph}><path d="M2 7l5-5v3h4c4 0 6 3 4 9h-3c1-4 0-5-2-5H7v3z" /></svg></QuickButton>
          <QuickButton $w={12} aria-label="撤消列表"><Caret /></QuickButton>
          <QuickButton aria-label="重做"><svg width="18" height="16" {...glyph}><path d="M16 7l-5-5v3H7C3 5 1 8 3 14h3c-1-4 0-5 2-5h3v3z" /></svg></QuickButton>
          <QuickButton $w={12} aria-label="重做列表"><Caret /></QuickButton>
          <QuickButton aria-label="项目"><svg width="18" height="16" {...glyph}><path d="M1.500 10V2h4l1 2h6v6zM5.500 5.500h9v7h-9z" /><path d="M10.500 7.500h6v8h-6z" fill="#fff" /><path d="M12 10h3M12 12h3" stroke="#2d5d9d" /></svg></QuickButton>
          <Select label="工作区" value="工作区: 默认" w={130} h={22} tone="title" />
          <QuickButton $w={16} aria-label="自定义"><svg width="10" height="8"><path d="M1 1h8M1 4h8L5 8z" stroke="#444" fill="#444" /></svg></QuickButton>
        </QuickAccess>
        <Title><span>Autodesk 3ds Max 2016</span><span>无标题</span></Title>
        <InfoCenter>
          <QuickButton $w={11} aria-label="展开"><svg width="4" height="8"><path d="M0 0l4 4-4 4z" fill="#333" /></svg></QuickButton>
          <SearchBox aria-label="搜索" placeholder="键入关键字或短语" />
          <QuickButton aria-label="查找"><svg width="16" height="16" {...glyph}><path d="M1 14.500l1-10 2-3h2l1 3v10zM9 14.500v-10l1-3h2l2 3 1 10zM7 6h2v4H7zM1 11h6M9 11h6" /></svg></QuickButton>
          <QuickButton aria-label="通讯"><svg width="16" height="16" {...glyph}><path d="M3 2c-2 6 4 11 10 8zM3 14.500h8l-3-4M8 7l4-4" /><circle cx="12" cy="3" r="1" /></svg></QuickButton>
          <QuickButton aria-label="收藏"><svg width="16" height="16" {...glyph}><path d="M8 1l2 5h5l-4 4 2 5-5-3-5 3 2-5-4-4h5z" /></svg></QuickButton>
          <QuickButton aria-label="用户"><svg width="16" height="16" {...glyph}><path d="M1 14.500c0-3 4-3 5-4-3-3-3-9 2-9s5 6 2 9c1 1 5 1 5 4z" /></svg></QuickButton>
          <SignIn>登录</SignIn>
          <QuickButton $w={14} aria-label="登录选项"><Caret /></QuickButton>
          <QuickButton aria-label="Exchange"><svg width="16" height="14"><path d="M1 1h5l3 6-3 6H1l3-6z" fill="#dce5f3" stroke="#31558d" /><path d="M15 1h-4L7 7l4 6h4l-3-6z" fill="#304fa0" stroke="#23396b" /></svg></QuickButton>
          <BarDivider />
          <QuickButton aria-label="帮助"><svg width="18" height="18"><circle cx="9" cy="9" r="7.500" fill="#f4f8ff" stroke="#345b91" /><text x="6" y="14" fill="#2850a0" fontSize="13" fontWeight="700">?</text></svg></QuickButton>
          <QuickButton $w={12} aria-label="帮助选项"><Caret /></QuickButton>
        </InfoCenter>
        <WindowButtons>
          <WindowButton aria-label="最小化"><svg width="12" height="12"><path d="M1 6.500h10" stroke="#000" /></svg></WindowButton>
          <WindowButton aria-label="最大化"><svg width="12" height="12"><path d="M1.500 1.500h9v9h-9z" fill="none" stroke="#000" /></svg></WindowButton>
          <WindowButton aria-label="关闭"><svg width="12" height="12"><path d="M1 1l10 10M11 1L1 11" stroke="#000" /></svg></WindowButton>
        </WindowButtons>
      </TitleBar>
      <MenuBar>{menus.map((m) => <MenuLabel key={m} text={m} />)}</MenuBar>
    </Header>
  );
}

const sideItems = ["渲染", "文件", "编辑", "选择", "显示", "变换", "动画", "模型", "室内", "室外", "图形", "材质", "灯光", "相机", "修改", "实用", "其它", "素材"];

export default function App() {
  return (
    <Desktop>
      <GlobalStyle />
      <AppWindow>
        <TopBar />
        <MainToolbar />
        <Ribbon>
          <RibbonGrip />
          <RibbonTabs>
            {["建模", "自由形式", "选择", "对象绘制", "填充"].map((t, i) => <RibbonTab key={t} $first={i === 0} $on={i === 2}>{t}</RibbonTab>)}
            <RibbonToggle aria-label="最小化功能区"><svg width="28" height="9"><rect x="1" width="13" height="8" rx="2" fill="#eee" /><path d="M5 5l3-3 3 3z" fill="#333" /><path d="M20 3h5l-2.500 3z" fill="#bbb" /></svg></RibbonToggle>
          </RibbonTabs>
          <RibbonPanel />
        </Ribbon>
        <Body>
          <SideBar>
            <SideRound aria-label="RDF3">
              <svg width="32" height="32"><circle cx="16" cy="16" r="16" fill="#858585" /><path d="M8 11l8-3 9 3-8 4zM7 13l8 3v10l-7-4zM18 16l7-3v9l-7 4z" fill="#fff" /></svg>
            </SideRound>
            <SideItem $accent>RDF3</SideItem>
            {sideItems.map((t) => <SideItem key={t}>{t}</SideItem>)}
            <SideRound aria-label="设置">
              <svg width="30" height="30" fill="none" stroke="#8b8b90"><circle cx="15" cy="15" r="13" strokeWidth="2" /><path d="M15 8v14M9 11.500l12 7M21 11.500l-12 7" strokeWidth="3" /><circle cx="15" cy="15" r="3" fill="#444" strokeWidth="2.500" /></svg>
            </SideRound>
          </SideBar>
          <Stage>
            <Viewport>
              <ViewLabels><button>[+]</button><button>[前 ]</button><button>[明暗处理 + 边面 ]</button></ViewLabels>
              <Scene />
            </Viewport>
            <SliderRow><SliderButton $w={16}>&lt;</SliderButton><SliderButton $w={125}>0 / 100</SliderButton><SliderButton $w={16}>&gt;</SliderButton></SliderRow>
            <RulerRow>
              <CurveToggle aria-label="迷你曲线编辑器"><svg width="18" height="18" fill="none" stroke="#ccc"><path d="M.5 1.500h17v5H.5zM.5 14.500h17v2H.5zM2 4c3-2 4 2 7 0s4 1 7 0M5 8v5M3 10l2-2 2 2M13 8v5M11 11l2 2 2-2" /></svg></CurveToggle>
              <Ruler>
                {Array.from({ length: 101 }, (_, n) => (
                  <Tick key={n} $major={n % 5 === 0} $last={n === 100}>{n % 5 === 0 && <TickLabel $now={n === 0}>{n}</TickLabel>}</Tick>
                ))}
              </Ruler>
            </RulerRow>
          </Stage>
          <CommandPanel />
        </Body>
        <Status />
      </AppWindow>
    </Desktop>
  );
}
